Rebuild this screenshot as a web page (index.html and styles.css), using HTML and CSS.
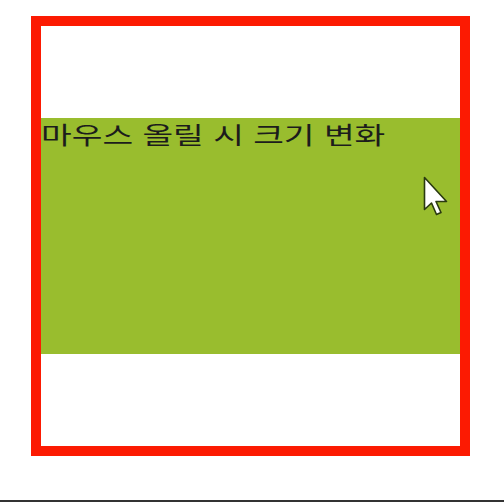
FILE: index.html
```html
<!DOCTYPE html>
<html lang="ko">
<head>
<meta charset="utf-8">
<title>마우스 올릴 시 크기 변화</title>
<link rel="stylesheet" href="styles.css">
</head>
<body>
<div class="page">
  <div class="frame">
    <div class="box">
      <p class="label">마우스 올릴 시 크기 변화</p>
      <svg class="cursor" width="26" height="40" viewBox="-1.5 -1.5 26 40">
        <path d="M0,0 L0,32 L7,25.5 L12,37 L16.5,35 L11.5,24 L22,24 Z" fill="#fff" stroke="#2a3a10" stroke-width="1.6" stroke-linejoin="round"/>
      </svg>
    </div>
  </div>
  <div class="spacer"></div>
  <div class="rule"></div>
</div>
</body>
</html>
```

FILE: styles.css
```css
html, body {
  margin: 0;
  padding: 0;
  background: #fff;
  overflow: hidden;
}
.page {
  height: 502px;
  display: flex;
  flex-direction: column;
  padding-top: 16px;
  box-sizing: border-box;
}
.frame {
  margin-left: 31px;
  width: 439px;
  height: 440px;
  box-sizing: border-box;
  border: 10px solid #fc1a02;
  display: flex;
  flex-direction: column;
  justify-content: center;
}
.box {
  position: relative;
  height: 236px;
  background: #99bd2e;
}
.label {
  display: inline-block;
  margin: 0;
  font-family: "Noto Sans CJK KR", "Noto Sans", sans-serif;
  font-size: 24px;
  line-height: 31px;
  color: #1c1c1c;
  white-space: nowrap;
  transform: scaleX(1.39);
  transform-origin: left top;
}
.cursor {
  position: absolute;
  left: 382px;
  top: 58px;
}
.spacer {
  flex: 1;
}
.rule {
  height: 2px;
  background: #333;
}
```
